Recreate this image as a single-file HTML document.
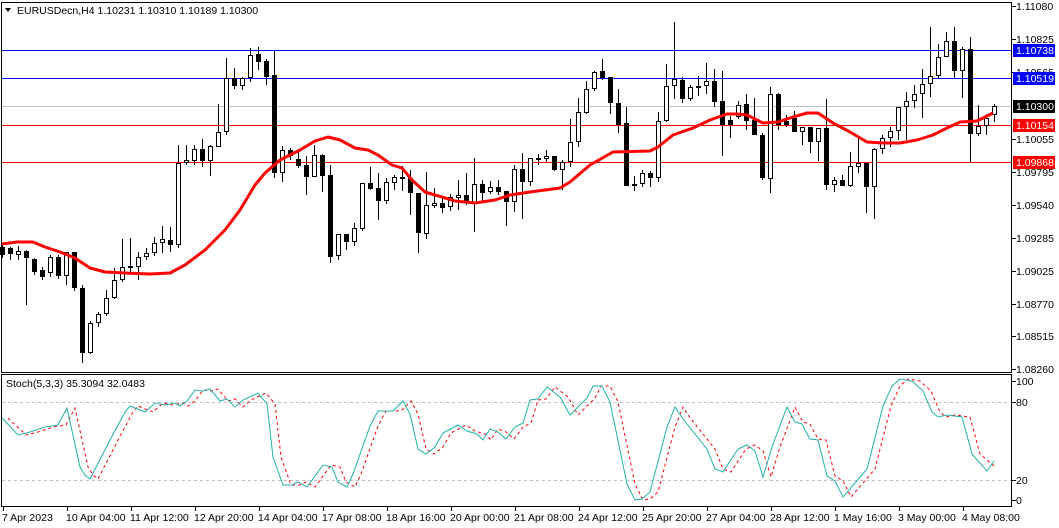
<!DOCTYPE html>
<html><head><meta charset="utf-8"><style>
html,body{margin:0;padding:0;background:#fff;}
body{width:1059px;height:528px;overflow:hidden;position:relative;font-family:"Liberation Sans",sans-serif;}
svg{position:absolute;left:0;top:0}
text{font-family:"Liberation Sans",sans-serif;font-size:10.5px;fill:#000}
.c line{stroke:#000;stroke-width:1}
.c rect.b{fill:#000}
.c rect.w{fill:#fff;stroke:#000;stroke-width:1}
</style></head><body>
<svg width="1059" height="528" viewBox="0 0 1059 528">
<g shape-rendering="crispEdges">
<rect x="1.5" y="2.5" width="1010" height="370" fill="none" stroke="#000"/>
<rect x="1.5" y="374.5" width="1010" height="132" fill="none" stroke="#000"/>
<line x1="2" y1="50.5" x2="1011" y2="50.5" stroke="#0000ff"/>
<line x1="2" y1="78.5" x2="1011" y2="78.5" stroke="#0000ff"/>
<line x1="2" y1="106.5" x2="1011" y2="106.5" stroke="#c0c0c0"/>
<line x1="2" y1="125.5" x2="1011" y2="125.5" stroke="#ff0000"/>
<line x1="2" y1="162.5" x2="1011" y2="162.5" stroke="#ff0000"/>
<line x1="2" y1="402.5" x2="1011" y2="402.5" stroke="#c0c0c0" stroke-dasharray="3,3"/>
<line x1="2" y1="480.5" x2="1011" y2="480.5" stroke="#c0c0c0" stroke-dasharray="3,3"/>
</g>
<g class="c" shape-rendering="crispEdges">
<line x1="2.5" y1="245" x2="2.5" y2="258"/><rect class="b" x="0" y="247" width="5" height="8"/>
<line x1="10.5" y1="247" x2="10.5" y2="260"/><rect class="b" x="8" y="248" width="5" height="6"/>
<line x1="18.5" y1="246" x2="18.5" y2="260"/><rect class="w" x="16.5" y="251.5" width="4" height="3"/>
<line x1="26.5" y1="250" x2="26.5" y2="305"/><rect class="b" x="24" y="251" width="5" height="7"/>
<line x1="34.5" y1="258" x2="34.5" y2="275"/><rect class="b" x="32" y="259" width="5" height="13"/>
<line x1="42.5" y1="267" x2="42.5" y2="280"/><rect class="b" x="40" y="270" width="5" height="7"/>
<line x1="50.5" y1="255" x2="50.5" y2="277"/><rect class="w" x="48.5" y="257.5" width="4" height="15"/>
<line x1="58.5" y1="255" x2="58.5" y2="279"/><rect class="b" x="56" y="257" width="5" height="19"/>
<line x1="66.5" y1="252" x2="66.5" y2="285"/><rect class="w" x="64.5" y="252.5" width="4" height="23"/>
<line x1="74.5" y1="252" x2="74.5" y2="291"/><rect class="b" x="72" y="252" width="5" height="36"/>
<line x1="82.5" y1="285" x2="82.5" y2="363"/><rect class="b" x="80" y="288" width="5" height="65"/>
<line x1="90.5" y1="321" x2="90.5" y2="354"/><rect class="w" x="88.5" y="323.5" width="4" height="29"/>
<line x1="98.5" y1="312" x2="98.5" y2="327"/><rect class="w" x="96.5" y="314.5" width="4" height="8"/>
<line x1="106.5" y1="290" x2="106.5" y2="316"/><rect class="w" x="104.5" y="298.5" width="4" height="15"/>
<line x1="114.5" y1="268" x2="114.5" y2="299"/><rect class="w" x="112.5" y="280.5" width="4" height="17"/>
<line x1="122.5" y1="239" x2="122.5" y2="282"/><rect class="w" x="120.5" y="267.5" width="4" height="12"/>
<line x1="130.5" y1="238" x2="130.5" y2="273"/><rect class="w" x="128.5" y="266.5" width="4" height="1"/>
<line x1="138.5" y1="252" x2="138.5" y2="280"/><rect class="w" x="136.5" y="257.5" width="4" height="9"/>
<line x1="146.5" y1="248" x2="146.5" y2="260"/><rect class="w" x="144.5" y="253.5" width="4" height="3"/>
<line x1="154.5" y1="237" x2="154.5" y2="256"/><rect class="w" x="152.5" y="243.5" width="4" height="9"/>
<line x1="162.5" y1="226" x2="162.5" y2="253"/><rect class="w" x="160.5" y="239.5" width="4" height="3"/>
<line x1="170.5" y1="227" x2="170.5" y2="252"/><rect class="b" x="168" y="240" width="5" height="5"/>
<line x1="178.5" y1="145" x2="178.5" y2="248"/><rect class="w" x="176.5" y="163.5" width="4" height="81"/>
<line x1="186.5" y1="145" x2="186.5" y2="165"/><rect class="w" x="184.5" y="160.5" width="4" height="2"/>
<line x1="194.5" y1="145" x2="194.5" y2="165"/><rect class="w" x="192.5" y="149.5" width="4" height="11"/>
<line x1="202.5" y1="139" x2="202.5" y2="167"/><rect class="b" x="200" y="149" width="5" height="12"/>
<line x1="210.5" y1="145" x2="210.5" y2="176"/><rect class="w" x="208.5" y="146.5" width="4" height="14"/>
<line x1="218.5" y1="104" x2="218.5" y2="147"/><rect class="w" x="216.5" y="132.5" width="4" height="14"/>
<line x1="226.5" y1="58" x2="226.5" y2="135"/><rect class="w" x="224.5" y="78.5" width="4" height="53"/>
<line x1="234.5" y1="68" x2="234.5" y2="89"/><rect class="b" x="232" y="78" width="5" height="8"/>
<line x1="242.5" y1="77" x2="242.5" y2="90"/><rect class="w" x="240.5" y="78.5" width="4" height="7"/>
<line x1="250.5" y1="48" x2="250.5" y2="82"/><rect class="w" x="248.5" y="55.5" width="4" height="22"/>
<line x1="258.5" y1="47" x2="258.5" y2="70"/><rect class="b" x="256" y="54" width="5" height="8"/>
<line x1="266.5" y1="59" x2="266.5" y2="85"/><rect class="b" x="264" y="61" width="5" height="16"/>
<line x1="274.5" y1="51" x2="274.5" y2="178"/><rect class="b" x="272" y="75" width="5" height="98"/>
<line x1="282.5" y1="146" x2="282.5" y2="182"/><rect class="w" x="280.5" y="150.5" width="4" height="22"/>
<line x1="290.5" y1="148" x2="290.5" y2="160"/><rect class="b" x="288" y="150" width="5" height="6"/>
<line x1="298.5" y1="150" x2="298.5" y2="168"/><rect class="b" x="296" y="159" width="5" height="7"/>
<line x1="306.5" y1="156" x2="306.5" y2="195"/><rect class="b" x="304" y="165" width="5" height="12"/>
<line x1="314.5" y1="145" x2="314.5" y2="177"/><rect class="w" x="312.5" y="155.5" width="4" height="21"/>
<line x1="322.5" y1="154" x2="322.5" y2="192"/><rect class="b" x="320" y="155" width="5" height="21"/>
<line x1="330.5" y1="165" x2="330.5" y2="263"/><rect class="b" x="328" y="175" width="5" height="82"/>
<line x1="338.5" y1="234" x2="338.5" y2="260"/><rect class="w" x="336.5" y="234.5" width="4" height="21"/>
<line x1="346.5" y1="234" x2="346.5" y2="250"/><rect class="b" x="344" y="234" width="5" height="8"/>
<line x1="354.5" y1="223" x2="354.5" y2="246"/><rect class="w" x="352.5" y="228.5" width="4" height="13"/>
<line x1="362.5" y1="183" x2="362.5" y2="231"/><rect class="w" x="360.5" y="183.5" width="4" height="45"/>
<line x1="370.5" y1="167" x2="370.5" y2="190"/><rect class="b" x="368" y="183" width="5" height="6"/>
<line x1="378.5" y1="173" x2="378.5" y2="220"/><rect class="b" x="376" y="188" width="5" height="13"/>
<line x1="386.5" y1="178" x2="386.5" y2="204"/><rect class="w" x="384.5" y="182.5" width="4" height="18"/>
<line x1="394.5" y1="175" x2="394.5" y2="190"/><rect class="w" x="392.5" y="177.5" width="4" height="5"/>
<line x1="402.5" y1="166" x2="402.5" y2="191"/><rect class="b" x="400" y="177" width="5" height="2"/>
<line x1="410.5" y1="170" x2="410.5" y2="215"/><rect class="b" x="408" y="178" width="5" height="15"/>
<line x1="418.5" y1="193" x2="418.5" y2="253"/><rect class="b" x="416" y="193" width="5" height="40"/>
<line x1="426.5" y1="172" x2="426.5" y2="239"/><rect class="w" x="424.5" y="205.5" width="4" height="28"/>
<line x1="434.5" y1="188" x2="434.5" y2="208"/><rect class="w" x="432.5" y="203.5" width="4" height="2"/>
<line x1="442.5" y1="198" x2="442.5" y2="213"/><rect class="b" x="440" y="203" width="5" height="5"/>
<line x1="450.5" y1="194" x2="450.5" y2="211"/><rect class="w" x="448.5" y="197.5" width="4" height="9"/>
<line x1="458.5" y1="180" x2="458.5" y2="210"/><rect class="w" x="456.5" y="195.5" width="4" height="2"/>
<line x1="466.5" y1="173" x2="466.5" y2="205"/><rect class="b" x="464" y="195" width="5" height="8"/>
<line x1="474.5" y1="158" x2="474.5" y2="232"/><rect class="w" x="472.5" y="184.5" width="4" height="18"/>
<line x1="482.5" y1="180" x2="482.5" y2="202"/><rect class="b" x="480" y="184" width="5" height="9"/>
<line x1="490.5" y1="181" x2="490.5" y2="194"/><rect class="w" x="488.5" y="187.5" width="4" height="4"/>
<line x1="498.5" y1="180" x2="498.5" y2="195"/><rect class="b" x="496" y="187" width="5" height="5"/>
<line x1="506.5" y1="191" x2="506.5" y2="226"/><rect class="b" x="504" y="191" width="5" height="11"/>
<line x1="514.5" y1="165" x2="514.5" y2="212"/><rect class="w" x="512.5" y="169.5" width="4" height="32"/>
<line x1="522.5" y1="153" x2="522.5" y2="219"/><rect class="b" x="520" y="169" width="5" height="13"/>
<line x1="530.5" y1="158" x2="530.5" y2="186"/><rect class="w" x="528.5" y="158.5" width="4" height="23"/>
<line x1="538.5" y1="154" x2="538.5" y2="165"/><rect class="b" x="536" y="158" width="5" height="2"/>
<line x1="546.5" y1="150" x2="546.5" y2="162"/><rect class="w" x="544.5" y="156.5" width="4" height="2"/>
<line x1="554.5" y1="156" x2="554.5" y2="171"/><rect class="b" x="552" y="156" width="5" height="14"/>
<line x1="562.5" y1="160" x2="562.5" y2="190"/><rect class="w" x="560.5" y="162.5" width="4" height="7"/>
<line x1="570.5" y1="119" x2="570.5" y2="167"/><rect class="w" x="568.5" y="142.5" width="4" height="19"/>
<line x1="578.5" y1="98" x2="578.5" y2="147"/><rect class="w" x="576.5" y="112.5" width="4" height="29"/>
<line x1="586.5" y1="81" x2="586.5" y2="114"/><rect class="w" x="584.5" y="89.5" width="4" height="23"/>
<line x1="594.5" y1="71" x2="594.5" y2="91"/><rect class="w" x="592.5" y="72.5" width="4" height="16"/>
<line x1="602.5" y1="59" x2="602.5" y2="80"/><rect class="b" x="600" y="71" width="5" height="7"/>
<line x1="610.5" y1="77" x2="610.5" y2="114"/><rect class="b" x="608" y="77" width="5" height="26"/>
<line x1="618.5" y1="89" x2="618.5" y2="133"/><rect class="b" x="616" y="103" width="5" height="22"/>
<line x1="626.5" y1="107" x2="626.5" y2="186"/><rect class="b" x="624" y="123" width="5" height="63"/>
<line x1="634.5" y1="176" x2="634.5" y2="191"/><rect class="b" x="632" y="184" width="5" height="2"/>
<line x1="642.5" y1="170" x2="642.5" y2="187"/><rect class="w" x="640.5" y="173.5" width="4" height="10"/>
<line x1="650.5" y1="171" x2="650.5" y2="187"/><rect class="b" x="648" y="173" width="5" height="5"/>
<line x1="658.5" y1="112" x2="658.5" y2="182"/><rect class="w" x="656.5" y="121.5" width="4" height="56"/>
<line x1="666.5" y1="64" x2="666.5" y2="122"/><rect class="w" x="664.5" y="86.5" width="4" height="34"/>
<line x1="674.5" y1="22" x2="674.5" y2="99"/><rect class="w" x="672.5" y="79.5" width="4" height="6"/>
<line x1="682.5" y1="77" x2="682.5" y2="103"/><rect class="b" x="680" y="80" width="5" height="19"/>
<line x1="690.5" y1="85" x2="690.5" y2="101"/><rect class="w" x="688.5" y="87.5" width="4" height="11"/>
<line x1="698.5" y1="76" x2="698.5" y2="96"/><rect class="b" x="696" y="86" width="5" height="2"/>
<line x1="706.5" y1="63" x2="706.5" y2="94"/><rect class="w" x="704.5" y="81.5" width="4" height="4"/>
<line x1="714.5" y1="69" x2="714.5" y2="107"/><rect class="b" x="712" y="81" width="5" height="21"/>
<line x1="722.5" y1="71" x2="722.5" y2="156"/><rect class="b" x="720" y="101" width="5" height="24"/>
<line x1="730.5" y1="116" x2="730.5" y2="138"/><rect class="b" x="728" y="120" width="5" height="5"/>
<line x1="738.5" y1="101" x2="738.5" y2="119"/><rect class="w" x="736.5" y="105.5" width="4" height="11"/>
<line x1="746.5" y1="94" x2="746.5" y2="130"/><rect class="b" x="744" y="104" width="5" height="17"/>
<line x1="754.5" y1="98" x2="754.5" y2="135"/><rect class="b" x="752" y="120" width="5" height="15"/>
<line x1="762.5" y1="133" x2="762.5" y2="180"/><rect class="b" x="760" y="135" width="5" height="43"/>
<line x1="770.5" y1="87" x2="770.5" y2="193"/><rect class="w" x="768.5" y="94.5" width="4" height="84"/>
<line x1="778.5" y1="93" x2="778.5" y2="130"/><rect class="b" x="776" y="94" width="5" height="31"/>
<line x1="786.5" y1="115" x2="786.5" y2="127"/><rect class="b" x="784" y="121" width="5" height="4"/>
<line x1="794.5" y1="111" x2="794.5" y2="132"/><rect class="b" x="792" y="118" width="5" height="14"/>
<line x1="802.5" y1="127" x2="802.5" y2="145"/><rect class="w" x="800.5" y="127.5" width="4" height="4"/>
<line x1="810.5" y1="127" x2="810.5" y2="153"/><rect class="b" x="808" y="127" width="5" height="15"/>
<line x1="818.5" y1="128" x2="818.5" y2="161"/><rect class="w" x="816.5" y="128.5" width="4" height="13"/>
<line x1="826.5" y1="99" x2="826.5" y2="190"/><rect class="b" x="824" y="128" width="5" height="57"/>
<line x1="834.5" y1="177" x2="834.5" y2="192"/><rect class="w" x="832.5" y="180.5" width="4" height="4"/>
<line x1="842.5" y1="175" x2="842.5" y2="186"/><rect class="b" x="840" y="180" width="5" height="6"/>
<line x1="850.5" y1="152" x2="850.5" y2="187"/><rect class="w" x="848.5" y="166.5" width="4" height="19"/>
<line x1="858.5" y1="137" x2="858.5" y2="173"/><rect class="w" x="856.5" y="163.5" width="4" height="3"/>
<line x1="866.5" y1="163" x2="866.5" y2="213"/><rect class="b" x="864" y="163" width="5" height="24"/>
<line x1="874.5" y1="148" x2="874.5" y2="219"/><rect class="w" x="872.5" y="149.5" width="4" height="37"/>
<line x1="882.5" y1="135" x2="882.5" y2="154"/><rect class="w" x="880.5" y="138.5" width="4" height="10"/>
<line x1="890.5" y1="127" x2="890.5" y2="147"/><rect class="w" x="888.5" y="131.5" width="4" height="6"/>
<line x1="898.5" y1="107" x2="898.5" y2="140"/><rect class="w" x="896.5" y="107.5" width="4" height="23"/>
<line x1="906.5" y1="92" x2="906.5" y2="140"/><rect class="w" x="904.5" y="101.5" width="4" height="5"/>
<line x1="914.5" y1="85" x2="914.5" y2="108"/><rect class="w" x="912.5" y="94.5" width="4" height="6"/>
<line x1="922.5" y1="69" x2="922.5" y2="118"/><rect class="w" x="920.5" y="84.5" width="4" height="9"/>
<line x1="930.5" y1="27" x2="930.5" y2="97"/><rect class="w" x="928.5" y="76.5" width="4" height="7"/>
<line x1="938.5" y1="44" x2="938.5" y2="79"/><rect class="w" x="936.5" y="57.5" width="4" height="18"/>
<line x1="946.5" y1="32" x2="946.5" y2="57"/><rect class="w" x="944.5" y="41.5" width="4" height="15"/>
<line x1="954.5" y1="27" x2="954.5" y2="78"/><rect class="b" x="952" y="41" width="5" height="30"/>
<line x1="962.5" y1="47" x2="962.5" y2="98"/><rect class="w" x="960.5" y="49.5" width="4" height="21"/>
<line x1="970.5" y1="37" x2="970.5" y2="163"/><rect class="b" x="968" y="49" width="5" height="85"/>
<line x1="978.5" y1="105" x2="978.5" y2="136"/><rect class="w" x="976.5" y="126.5" width="4" height="7"/>
<line x1="986.5" y1="114" x2="986.5" y2="135"/><rect class="w" x="984.5" y="118.5" width="4" height="7"/>
<line x1="994.5" y1="104" x2="994.5" y2="122"/><rect class="w" x="992.5" y="106.5" width="4" height="8"/>
</g>
<polyline fill="none" stroke="#ff0000" stroke-width="3" stroke-linejoin="round" points="2,244 17,242 33,242 45,247 60,252 75,258 90,268 105,272 125,273 150,274 170,273 185,265 205,250 225,230 240,210 255,185 265,173 280,160 300,150 315,141 328,137 340,140 355,148 368,150 378,155 392,165 402,168 412,180 425,192 442,197 455,201 475,203 495,200 510,195 530,192 560,188 570,182 590,165 613,152 650,151 658,147 673,135 693,128 710,120 727,114 737,114 747,115 763,123 778,122 793,117 807,113 818,113 833,123 850,132 867,142 883,143 900,143 917,140 933,135 947,128 960,122 977,121 993,113"/>
<polyline fill="none" stroke="#ff0000" stroke-width="1" stroke-dasharray="3,3" points="8,418 26,435 38,432 53,427 66,425 75,408 88,467 93,475 98,479 118,440 133,412 138,406 153,412 163,403 173,405 183,403 188,406 195,401 203,390 211,391 218,389 228,401 235,399 243,407 251,400 266,393 275,404 281,457 291,485 300,485 306,482 315,487 331,465 340,467 346,482 355,487 361,474 378,426 386,411 401,411 411,401 418,414 426,449 434,454 443,447 451,433 466,425 475,431 485,434 491,440 498,429 506,432 514,439 523,427 531,423 538,400 546,399 555,387 568,397 578,415 586,407 595,398 601,386 610,386 618,402 635,484 643,500 650,499 658,492 675,427 683,407 691,419 715,449 723,469 731,472 746,449 755,445 763,451 771,477 780,447 795,407 803,422 810,424 818,439 826,440 835,476 843,481 851,497 875,469 891,406 900,386 908,379 920,381 931,391 940,412 946,417 955,415 970,417 980,454 994,466"/>
<polyline fill="none" stroke="#20b2aa" stroke-width="1" points="2,418 18,435 30,432 45,427 58,425 67,408 80,467 85,475 90,479 110,440 125,412 130,406 145,412 155,403 165,405 175,403 180,406 187,401 195,390 203,391 210,389 220,401 227,399 235,407 243,400 258,393 267,404 273,457 283,485 292,485 298,482 307,487 323,465 332,467 338,482 347,487 353,474 370,426 378,411 393,411 403,401 410,414 418,449 426,454 435,447 443,433 458,425 467,431 477,434 483,440 490,429 498,432 506,439 515,427 523,423 530,400 538,399 547,387 560,397 570,415 578,407 587,398 593,386 602,386 610,402 627,484 635,500 642,499 650,492 667,427 675,407 683,419 707,449 715,469 723,472 738,449 747,445 755,451 763,477 772,447 787,407 795,422 802,424 810,439 818,440 827,476 835,481 843,497 867,469 883,406 892,386 900,379 912,381 923,391 932,412 938,417 947,415 962,417 972,454 987,471 994,461"/>
<path d="M5 8 L11 8 L8 12 Z" fill="#000"/>
<text x="17" y="14">EURUSDecn,H4  1.10231 1.10310 1.10189 1.10300</text>
<text x="6" y="387">Stoch(5,3,3) 35.3094 32.0483</text>
<g shape-rendering="crispEdges" stroke="#000">
<line x1="1012" y1="6.5" x2="1016" y2="6.5"/><line x1="1012" y1="39.5" x2="1016" y2="39.5"/><line x1="1012" y1="72.5" x2="1016" y2="72.5"/><line x1="1012" y1="139.5" x2="1016" y2="139.5"/><line x1="1012" y1="172.5" x2="1016" y2="172.5"/><line x1="1012" y1="205.5" x2="1016" y2="205.5"/><line x1="1012" y1="238.5" x2="1016" y2="238.5"/><line x1="1012" y1="271.5" x2="1016" y2="271.5"/><line x1="1012" y1="304.5" x2="1016" y2="304.5"/><line x1="1012" y1="336.5" x2="1016" y2="336.5"/><line x1="1012" y1="369.5" x2="1016" y2="369.5"/>
<line x1="1012" y1="381.5" x2="1016" y2="381.5"/><line x1="1012" y1="402.5" x2="1016" y2="402.5"/><line x1="1012" y1="480.5" x2="1016" y2="480.5"/><line x1="1012" y1="500.5" x2="1016" y2="500.5"/>
</g>
<text x="1016" y="10">1.11080</text>
<text x="1016" y="43">1.10825</text>
<text x="1016" y="76">1.10565</text>
<text x="1016" y="143">1.10055</text>
<text x="1016" y="176">1.09795</text>
<text x="1016" y="209">1.09540</text>
<text x="1016" y="242">1.09285</text>
<text x="1016" y="275">1.09025</text>
<text x="1016" y="308">1.08770</text>
<text x="1016" y="340">1.08515</text>
<text x="1016" y="373">1.08260</text>
<rect x="1013" y="44" width="42" height="13" fill="#0000ff"/><text x="1016" y="54" style="fill:#fff">1.10738</text>
<rect x="1013" y="72" width="42" height="13" fill="#0000ff"/><text x="1016" y="82" style="fill:#fff">1.10519</text>
<rect x="1013" y="100" width="42" height="13" fill="#000"/><text x="1016" y="110" style="fill:#fff">1.10300</text>
<rect x="1013" y="119" width="42" height="13" fill="#ff0000"/><text x="1016" y="129" style="fill:#fff">1.10154</text>
<rect x="1013" y="156" width="42" height="13" fill="#ff0000"/><text x="1016" y="166" style="fill:#fff">1.09868</text>
<text x="1016" y="385">100</text>
<text x="1016" y="406">80</text>
<text x="1016" y="484">20</text>
<text x="1016" y="504">0</text>
<g shape-rendering="crispEdges" stroke="#000">
<line x1="3.5" y1="507" x2="3.5" y2="511"/><line x1="67.5" y1="507" x2="67.5" y2="511"/><line x1="131.5" y1="507" x2="131.5" y2="511"/><line x1="195.5" y1="507" x2="195.5" y2="511"/><line x1="259.5" y1="507" x2="259.5" y2="511"/><line x1="323.5" y1="507" x2="323.5" y2="511"/><line x1="387.5" y1="507" x2="387.5" y2="511"/><line x1="451.5" y1="507" x2="451.5" y2="511"/><line x1="515.5" y1="507" x2="515.5" y2="511"/><line x1="579.5" y1="507" x2="579.5" y2="511"/><line x1="643.5" y1="507" x2="643.5" y2="511"/><line x1="707.5" y1="507" x2="707.5" y2="511"/><line x1="771.5" y1="507" x2="771.5" y2="511"/><line x1="835.5" y1="507" x2="835.5" y2="511"/><line x1="899.5" y1="507" x2="899.5" y2="511"/><line x1="963.5" y1="507" x2="963.5" y2="511"/>
</g>
<text x="2" y="521">7 Apr 2023</text>
<text x="66" y="521">10 Apr 04:00</text>
<text x="130" y="521">11 Apr 12:00</text>
<text x="194" y="521">12 Apr 20:00</text>
<text x="258" y="521">14 Apr 04:00</text>
<text x="322" y="521">17 Apr 08:00</text>
<text x="386" y="521">18 Apr 16:00</text>
<text x="450" y="521">20 Apr 00:00</text>
<text x="514" y="521">21 Apr 08:00</text>
<text x="578" y="521">24 Apr 12:00</text>
<text x="642" y="521">25 Apr 20:00</text>
<text x="706" y="521">27 Apr 04:00</text>
<text x="770" y="521">28 Apr 12:00</text>
<text x="834" y="521">1 May 16:00</text>
<text x="898" y="521">3 May 00:00</text>
<text x="962" y="521">4 May 08:00</text>
</svg>
</body></html>
